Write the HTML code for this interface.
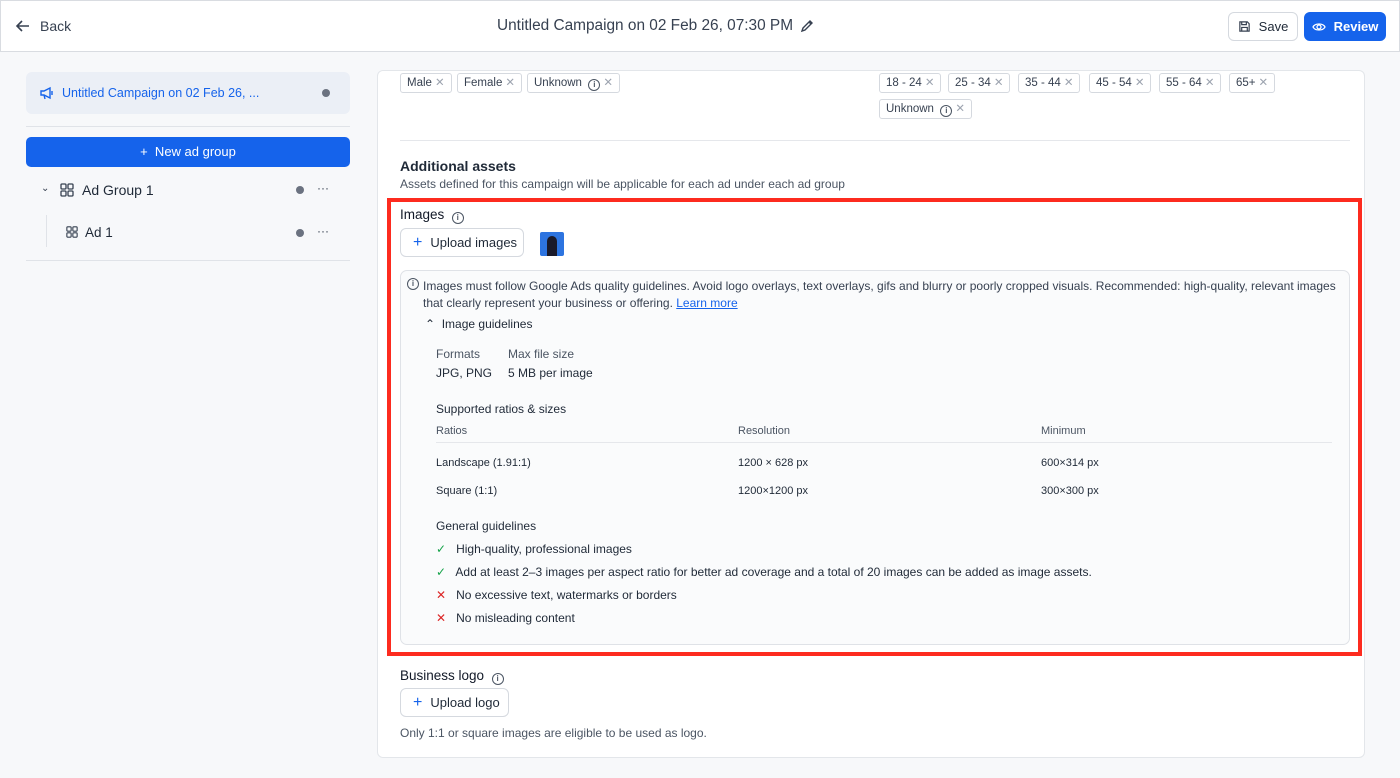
<!DOCTYPE html>
<html><head><meta charset="utf-8"><style>
*{box-sizing:border-box;margin:0;padding:0}
body{width:1400px;height:778px;background:#f7f8fa;font-family:"Liberation Sans",sans-serif;color:#1f2937;position:relative;overflow:hidden;font-size:13px}
.abs{position:absolute}
.hdr{left:0;top:0;width:1400px;height:52px;background:#fff;border:1px solid #d9dce1}
.btn{border:1px solid #d5d9df;border-radius:6px;background:#fff;display:flex;align-items:center;justify-content:center;gap:8px;font-size:13px;color:#1f2937}
.tag{position:absolute;height:20px;border:1px solid #d5d9df;border-radius:3px;font-size:11.5px;color:#374151;padding:0 6px;line-height:18px;background:#fff;white-space:nowrap}
.tag .x{color:#9ca3af;margin-left:3px}
.i{display:inline-block;width:12px;height:12px;border:1px solid #4b5563;border-radius:50%;font-size:8px;line-height:10px;text-align:center;vertical-align:-1px;color:#4b5563;font-weight:bold}
.t12{font-size:12px}
</style></head><body>
<div class="abs hdr"></div>
<svg class="abs" style="left:15px;top:18px" width="16" height="16" viewBox="0 0 16 16" fill="none" stroke="#374151" stroke-width="1.6"><path d="M14 8H2M7 3L2 8l5 5"/></svg>
<div class="abs" style="left:40px;top:18px;font-size:14px;color:#374151">Back</div>
<div class="abs" style="left:497px;top:17px;font-size:15.4px;color:#374151">Untitled Campaign on 02 Feb 26, 07:30 PM</div>
<svg class="abs" style="left:799px;top:18px" width="16" height="16" viewBox="0 0 16 16" fill="none" stroke="#374151" stroke-width="1.4"><path d="M3 13l1-3 7-7 2 2-7 7zM10 4l2 2"/></svg>
<div class="abs btn" style="left:1228px;top:12px;width:70px;height:29px"><svg width="13" height="13" viewBox="0 0 14 14" fill="none" stroke="#374151" stroke-width="1.3"><path d="M2 2h8l2 2v8H2z M4 2v3h5V2 M4 12V8h6v4"/></svg>Save</div>
<div class="abs btn" style="left:1304px;top:12px;width:82px;height:29px;background:#1563eb;border-color:#1563eb;color:#fff;font-weight:bold"><svg width="14" height="12" viewBox="0 0 14 12" fill="none" stroke="#fff" stroke-width="1.3"><path d="M1 6c2-4 10-4 12 0-2 4-10 4-12 0z"/><circle cx="7" cy="6" r="2"/></svg>Review</div>

<div class="abs" style="left:26px;top:72px;width:324px;height:42px;background:#ebeff6;border-radius:6px"></div>
<svg class="abs" style="left:39px;top:85px" width="16" height="16" viewBox="0 0 16 16" fill="none" stroke="#1563eb" stroke-width="1.4"><path d="M2 6h3l6-3v10l-6-3H2zM5 10l1 4M13 6v4"/></svg>
<div class="abs" style="left:62px;top:86px;font-size:12.5px;color:#1563eb">Untitled Campaign on 02 Feb 26, ...</div>
<div class="abs" style="left:322px;top:89px;width:8px;height:8px;border-radius:50%;background:#6b7280"></div>
<div class="abs" style="left:26px;top:126px;width:324px;height:1px;background:#e0e3e8"></div>
<div class="abs" style="left:26px;top:137px;width:324px;height:30px;background:#1563eb;border-radius:5px;color:#fff;font-size:13px;text-align:center;line-height:30px">+&nbsp; New ad group</div>
<div class="abs" style="left:41px;top:183px;font-size:10px;color:#374151">⌄</div>
<svg class="abs" style="left:60px;top:183px" width="14" height="14" viewBox="0 0 14 14" fill="none" stroke="#374151" stroke-width="1.3"><rect x="1" y="1" width="5" height="5" rx="1"/><rect x="8" y="1" width="5" height="5" rx="1"/><rect x="1" y="8" width="5" height="5" rx="1"/><rect x="8" y="8" width="5" height="5" rx="1"/></svg>
<div class="abs" style="left:82px;top:182px;font-size:14px;color:#1f2937">Ad Group 1</div>
<div class="abs" style="left:296px;top:186px;width:8px;height:8px;border-radius:50%;background:#6b7280"></div>
<div class="abs" style="left:317px;top:181px;font-size:12px;color:#374151">···</div>
<div class="abs" style="left:46px;top:215px;width:1px;height:32px;background:#e0e3e8"></div>
<svg class="abs" style="left:66px;top:226px" width="12" height="12" viewBox="0 0 14 14" fill="none" stroke="#374151" stroke-width="1.3"><rect x="1" y="1" width="5" height="5" rx="1"/><rect x="8" y="1" width="5" height="5" rx="1"/><rect x="1" y="8" width="5" height="5" rx="1"/><rect x="8" y="8" width="5" height="5" rx="1"/></svg>
<div class="abs" style="left:85px;top:225px;font-size:13.5px">Ad 1</div>
<div class="abs" style="left:296px;top:229px;width:8px;height:8px;border-radius:50%;background:#6b7280"></div>
<div class="abs" style="left:317px;top:224px;font-size:12px;color:#374151">···</div>
<div class="abs" style="left:26px;top:260px;width:324px;height:1px;background:#e0e3e8"></div>

<div class="abs" style="left:377px;top:70px;width:988px;height:688px;background:#fff;border:1px solid #e3e6ea;border-radius:6px"></div>
<div class="tag" style="left:400px;top:73px">Male<span class="x">✕</span></div>
<div class="tag" style="left:457px;top:73px">Female<span class="x">✕</span></div>
<div class="tag" style="left:527px;top:73px">Unknown &nbsp;<span class="i">i</span><span class="x">✕</span></div>
<div class="tag" style="left:879px;top:73px">18 - 24<span class="x">✕</span></div>
<div class="tag" style="left:948px;top:73px">25 - 34<span class="x">✕</span></div>
<div class="tag" style="left:1018px;top:73px">35 - 44<span class="x">✕</span></div>
<div class="tag" style="left:1089px;top:73px">45 - 54<span class="x">✕</span></div>
<div class="tag" style="left:1159px;top:73px">55 - 64<span class="x">✕</span></div>
<div class="tag" style="left:1229px;top:73px">65+<span class="x">✕</span></div>
<div class="tag" style="left:879px;top:99px">Unknown &nbsp;<span class="i">i</span><span class="x">✕</span></div>
<div class="abs" style="left:400px;top:140px;width:950px;height:1px;background:#e5e7eb"></div>
<div class="abs" style="left:400px;top:158px;font-size:14px;font-weight:bold;color:#1f2937">Additional assets</div>
<div class="abs t12" style="left:400px;top:177px;color:#4b5563">Assets defined for this campaign will be applicable for each ad under each ad group</div>

<div class="abs" style="left:400px;top:207px;font-size:13.5px;color:#111827">Images &nbsp;<span class="i">i</span></div>
<div class="abs btn" style="left:400px;top:228px;width:124px;height:29px;justify-content:flex-start;padding-left:12px"><span style="color:#1563eb;font-size:16px">+</span>Upload images</div>
<div class="abs" style="left:540px;top:232px;width:24px;height:24px;background:#2d74e0;border-radius:2px"><div style="margin:4px 0 0 7px;width:10px;height:20px;background:#1a1a2a;border-radius:5px 5px 0 0"></div></div>

<div class="abs" style="left:400px;top:270px;width:950px;height:375px;background:#fafbfc;border:1px solid #dfe2e7;border-radius:7px"></div>
<span class="abs i" style="left:407px;top:278px">i</span>
<div class="abs t12" style="left:423px;top:278px;width:915px;line-height:17px;color:#374151">Images must follow Google Ads quality guidelines. Avoid logo overlays, text overlays, gifs and blurry or poorly cropped visuals. Recommended: high-quality, relevant images that clearly represent your business or offering. <span style="color:#1563eb;text-decoration:underline">Learn more</span></div>
<div class="abs t12" style="left:425px;top:317px;color:#1f2937">⌃&nbsp; Image guidelines</div>
<div class="abs t12" style="left:436px;top:347px;color:#4b5563">Formats</div>
<div class="abs t12" style="left:508px;top:347px;color:#4b5563">Max file size</div>
<div class="abs t12" style="left:436px;top:366px">JPG, PNG</div>
<div class="abs t12" style="left:508px;top:366px">5 MB per image</div>
<div class="abs t12" style="left:436px;top:402px">Supported ratios &amp; sizes</div>
<div class="abs" style="left:436px;top:425px;font-size:11px;color:#4b5563">Ratios</div>
<div class="abs" style="left:738px;top:425px;font-size:11px;color:#4b5563">Resolution</div>
<div class="abs" style="left:1041px;top:425px;font-size:11px;color:#4b5563">Minimum</div>
<div class="abs" style="left:436px;top:442px;width:896px;height:1px;background:#e5e7eb"></div>
<div class="abs" style="left:436px;top:457px;font-size:11px">Landscape (1.91:1)</div>
<div class="abs" style="left:738px;top:457px;font-size:11px">1200 × 628 px</div>
<div class="abs" style="left:1041px;top:457px;font-size:11px">600×314 px</div>
<div class="abs" style="left:436px;top:485px;font-size:11px">Square (1:1)</div>
<div class="abs" style="left:738px;top:485px;font-size:11px">1200×1200 px</div>
<div class="abs" style="left:1041px;top:485px;font-size:11px">300×300 px</div>
<div class="abs t12" style="left:436px;top:519px">General guidelines</div>
<div class="abs t12" style="left:436px;top:542px"><span style="color:#16a34a">✓</span>&nbsp;&nbsp; High-quality, professional images</div>
<div class="abs t12" style="left:436px;top:565px"><span style="color:#16a34a">✓</span>&nbsp;&nbsp; Add at least 2–3 images per aspect ratio for better ad coverage and a total of 20 images can be added as image assets.</div>
<div class="abs t12" style="left:436px;top:588px"><span style="color:#dc2626">✕</span>&nbsp;&nbsp; No excessive text, watermarks or borders</div>
<div class="abs t12" style="left:436px;top:611px"><span style="color:#dc2626">✕</span>&nbsp;&nbsp; No misleading content</div>

<div class="abs" style="left:387px;top:198px;width:975px;height:458px;border:4px solid #fd2b1f"></div>

<div class="abs" style="left:400px;top:668px;font-size:13.5px;color:#111827">Business logo &nbsp;<span class="i">i</span></div>
<div class="abs btn" style="left:400px;top:688px;width:109px;height:29px;justify-content:flex-start;padding-left:12px"><span style="color:#1563eb;font-size:16px">+</span>Upload logo</div>
<div class="abs t12" style="left:400px;top:726px;color:#4b5563">Only 1:1 or square images are eligible to be used as logo.</div>
</body></html>
